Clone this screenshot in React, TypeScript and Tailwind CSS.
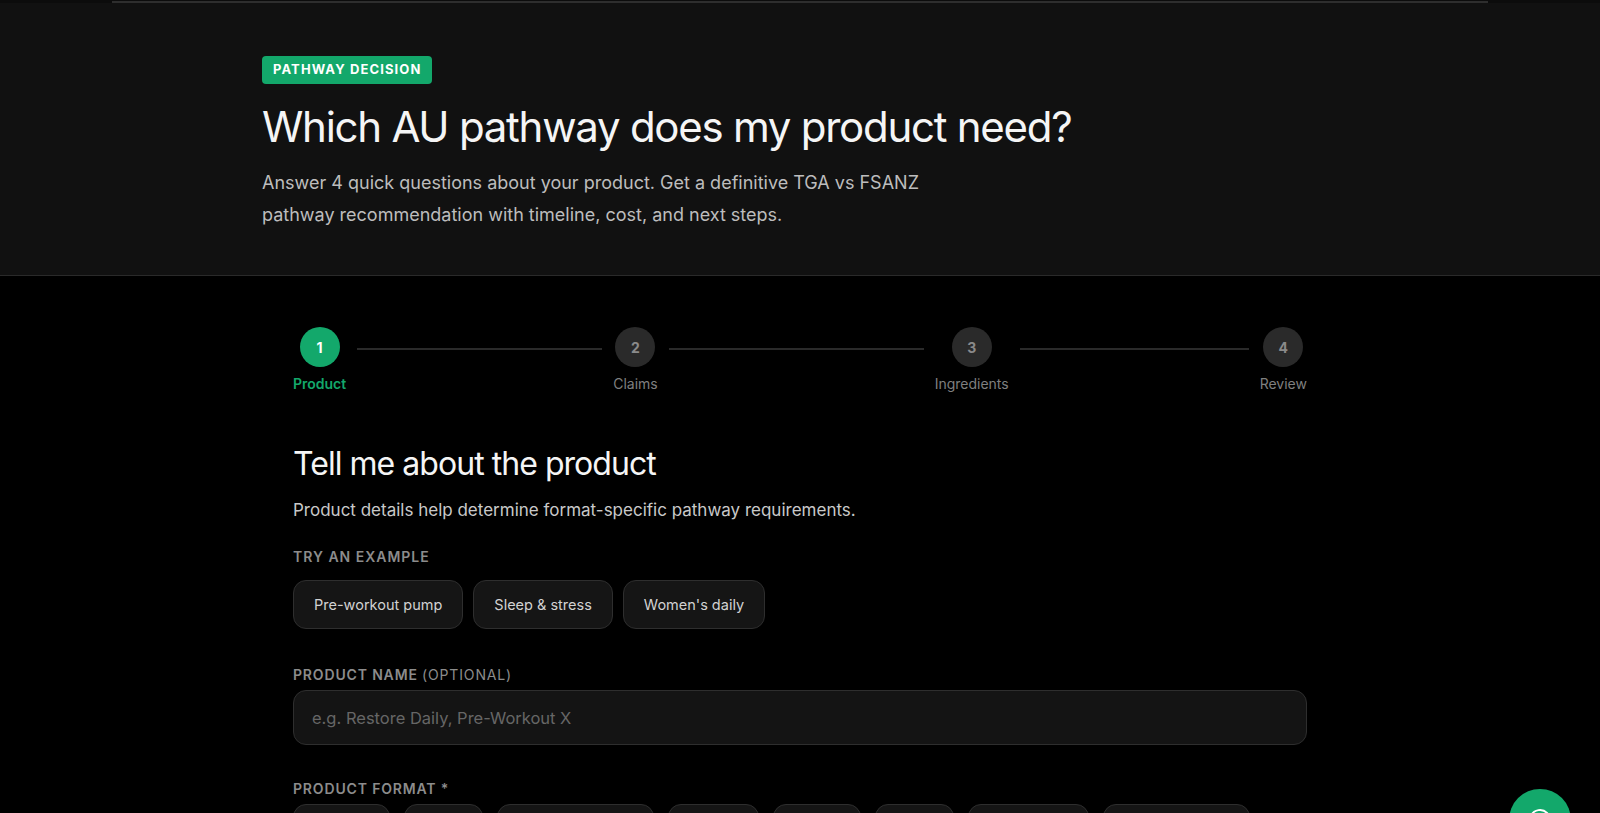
import { MessageCircle } from 'lucide-react';

const steps = [
    { n: 1, label: 'Product', active: true },
    { n: 2, label: 'Claims', active: false },
    { n: 3, label: 'Ingredients', active: false },
    { n: 4, label: 'Review', active: false },
];

// connector weights between steps
const lineFlex = ['flex-[245_1_0%]', 'flex-[255_1_0%]', 'flex-[229_1_0%]'];

const examples = ['Pre-workout pump', 'Sleep & stress', "Women's daily"];

const formats = [
    { label: 'Capsule', w: 'w-[97px]' },
    { label: 'Shot', w: 'w-[79px]' },
    { label: 'Powder / sachet', w: 'w-[157px]' },
    { label: 'Softgel', w: 'w-[91px]' },
    { label: 'Tablet', w: 'w-[88px]' },
    { label: 'Drops', w: 'w-[79px]' },
    { label: 'Oral spray', w: 'w-[121px]' },
    { label: 'Topical cream', w: 'w-[147px]' },
];

const Stepper = () => (
    <div className="flex items-start">
        {steps.map((step, i) => (
            <div key={step.n} className="contents">
                <div className="flex flex-col items-center gap-[8px]">
                    <div
                        className={`w-10 h-10 rounded-full flex items-center justify-center text-[14px] font-bold ${
                            step.active
                                ? 'bg-[#13a86b] text-white'
                                : 'bg-[#2a2a2a] text-[#8a8a8a]'
                        }`}
                    >
                        {step.n}
                    </div>
                    <span
                        className={`text-[14px] leading-[18px] ${
                            step.active
                                ? 'text-[#13a86b] font-semibold'
                                : 'text-[#7f7f7f]'
                        }`}
                    >
                        {step.label}
                    </span>
                </div>
                {i < steps.length - 1 && (
                    <div
                        className={`${lineFlex[i]} h-[2px] bg-[#2a2a2a] mt-[21px] mx-[11px]`}
                    />
                )}
            </div>
        ))}
    </div>
);

export default function App() {
    return (
        <div className="min-h-screen bg-black text-white font-['Inter',sans-serif] overflow-hidden">
            {/* intro header */}
            <header className="bg-[#111111] border-b border-[#2a2a2a]">
                <div className="h-[3px] bg-[#0c0c0c] px-[112px] pt-[1px]">
                    <div className="h-[2px] bg-[#2e2e2e]" />
                </div>
                <div className="w-[1076px] mx-auto pt-[53px] pb-[44px]">
                    <span className="inline-flex items-center h-[28px] px-[11px] rounded-[4px] bg-[#13a86b] text-[13px] font-bold tracking-[0.085em] text-white">
                        PATHWAY DECISION
                    </span>
                    <h1 className="mt-[19px] text-[42px] leading-[48px] tracking-[-0.03em] font-normal text-[#f5f5f5]">
                        Which AU pathway does my product need?
                    </h1>
                    <p className="mt-[16px] max-w-[670px] text-[18px] leading-[32px] text-[#bdbdbd]">
                        Answer 4 quick questions about your product. Get a
                        definitive TGA vs FSANZ pathway recommendation with
                        timeline, cost, and next steps.
                    </p>
                </div>
            </header>

            <main className="w-[1014px] mx-auto pt-[51px]">
                <Stepper />

                <h2 className="mt-[51px] text-[32px] leading-[40px] tracking-[-0.03em] text-[#f5f5f5]">
                    Tell me about the product
                </h2>
                <p className="mt-[14px] text-[17px] leading-[24px] text-[#c9c9c9]">
                    Product details help determine format-specific pathway
                    requirements.
                </p>

                <div className="mt-[25px] text-[14px] leading-[20px] font-semibold tracking-[0.07em] text-[#8c8c8c]">
                    TRY AN EXAMPLE
                </div>
                <div className="mt-[13px] flex gap-[10px]">
                    {examples.map((ex) => (
                        <button
                            key={ex}
                            className="h-[49px] px-[20px] rounded-[13px] bg-[#151515] border border-[#2e2e2e] text-[14.5px] text-[#d2d2d2]"
                        >
                            {ex}
                        </button>
                    ))}
                </div>

                <label className="block mt-[36px] text-[14px] leading-[20px] font-semibold tracking-[0.06em] text-[#8c8c8c]">
                    PRODUCT NAME{' '}
                    <span className="font-normal">(OPTIONAL)</span>
                </label>
                <input
                    type="text"
                    placeholder="e.g. Restore Daily, Pre-Workout X"
                    className="mt-[5px] w-full h-[55px] px-[18px] rounded-[13px] bg-[#141414] border border-[#2e2e2e] text-[16.5px] text-white placeholder:text-[#666666] outline-none"
                />

                <label className="block mt-[34px] text-[14px] leading-[20px] font-semibold tracking-[0.06em] text-[#8c8c8c]">
                    PRODUCT FORMAT *
                </label>
                <div className="mt-[5px] flex gap-[14px] flex-wrap">
                    {formats.map((f) => (
                        <button
                            key={f.label}
                            className={`${f.w} h-[46px] rounded-[13px] bg-[#151515] border border-[#2e2e2e] text-[14.5px] text-[#d2d2d2]`}
                        >
                            {f.label}
                        </button>
                    ))}
                </div>
            </main>

            {/* help bubble */}
            <button className="fixed right-[29px] bottom-[-38px] w-[62px] h-[62px] rounded-full bg-[#13a86b] flex items-center justify-center">
                <MessageCircle size={24} className="text-white" />
            </button>
        </div>
    );
}
